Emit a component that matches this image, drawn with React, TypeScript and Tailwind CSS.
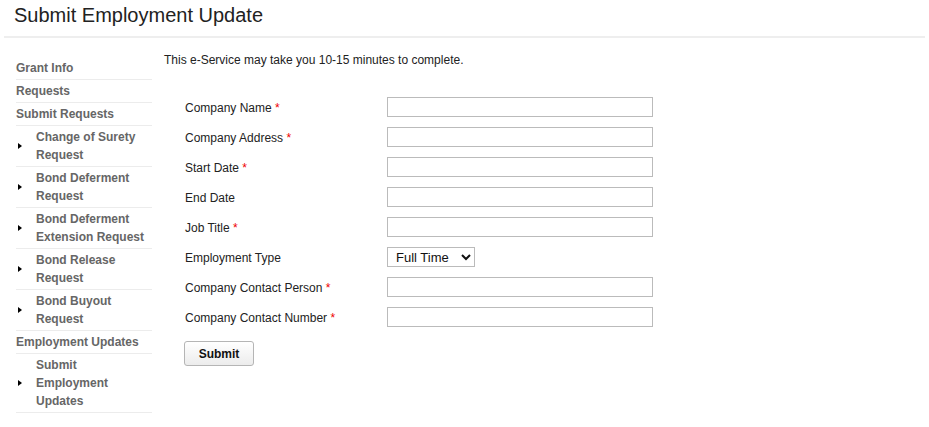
import React from 'react';

const FONT = { fontFamily: '"Liberation Sans", Arial, sans-serif' };

type NavItem = { lines: string[]; sub?: boolean };

const NAV: NavItem[] = [
  { lines: ['Grant Info'] },
  { lines: ['Requests'] },
  { lines: ['Submit Requests'] },
  { lines: ['Change of Surety', 'Request'], sub: true },
  { lines: ['Bond Deferment', 'Request'], sub: true },
  { lines: ['Bond Deferment', 'Extension Request'], sub: true },
  { lines: ['Bond Release', 'Request'], sub: true },
  { lines: ['Bond Buyout', 'Request'], sub: true },
  { lines: ['Employment Updates'] },
  { lines: ['Submit', 'Employment', 'Updates'], sub: true },
];

const FIELDS: { label: string; required?: boolean; select?: boolean }[] = [
  { label: 'Company Name', required: true },
  { label: 'Company Address', required: true },
  { label: 'Start Date', required: true },
  { label: 'End Date' },
  { label: 'Job Title', required: true },
  { label: 'Employment Type', select: true },
  { label: 'Company Contact Person', required: true },
  { label: 'Company Contact Number', required: true },
];

function Sidebar() {
  return (
    <ul className="w-[136px] shrink-0 mt-[19px] ml-[16px]">
      {NAV.map((item, i) => (
        <li key={i} className="border-b border-[#ececec] py-[2px]">
          {item.sub ? (
            <div className="flex items-center">
              <span className="ml-[2px] w-0 h-0 border-y-[3px] border-y-transparent border-l-[4px] border-l-black" />
              <a href="#" className="ml-[14px] block text-[12px] leading-[18px] font-bold text-[#666]">
                {item.lines.map((l, j) => (
                  <span key={j} className="block whitespace-nowrap">{l}</span>
                ))}
              </a>
            </div>
          ) : (
            <a href="#" className="block text-[12px] leading-[18px] font-bold text-[#666]">
              {item.lines[0]}
            </a>
          )}
        </li>
      ))}
    </ul>
  );
}

export default function App() {
  return (
    <div className="w-[929px] h-[427px] bg-white text-[#222]" style={FONT}>
      {/* Header */}
      <div className="mx-[4px] h-[38px] border-b-2 border-[#eeeeee]">
        <h1 className="pl-[10px] pt-[3px] text-[20px] leading-[24px] font-normal text-[#222]">
          Submit Employment Update
        </h1>
      </div>

      <div className="flex">
        <Sidebar />

        <div className="ml-[12px] pt-[14px] flex-1">
          <p className="text-[12px] leading-4 text-[#222]">
            This e-Service may take you 10-15 minutes to complete.
          </p>

          <form className="mt-[24px] pl-[21px]" onSubmit={(e) => e.preventDefault()}>
            {FIELDS.map((f) => (
              <div key={f.label} className="flex items-center h-[30px]">
                <label className="w-[202px] text-[12px] leading-4 text-[#222] pt-[2px]">
                  {f.label}
                  {f.required && <span className="text-[#e00]"> *</span>}
                </label>
                {f.select ? (
                  <select
                    defaultValue="Full Time"
                    className="w-[88px] h-[20px] border border-[#bbbbbb] bg-white text-[13px] text-[#111] pl-[4px]"
                  >
                    <option>Full Time</option>
                    <option>Part Time</option>
                    <option>Contract</option>
                  </select>
                ) : (
                  <input
                    type="text"
                    className="w-[266px] h-[20px] border border-[#bbbbbb] bg-white px-1 text-[12px] outline-none"
                  />
                )}
              </div>
            ))}

            <button
              type="submit"
              className="mt-[9px] -ml-[1px] w-[70px] h-[25px] rounded-[3px] border border-[#b5b5b5] bg-gradient-to-b from-white to-[#ececec] text-[12px] font-bold text-[#111]"
            >
              Submit
            </button>
          </form>
        </div>
      </div>
    </div>
  );
}
